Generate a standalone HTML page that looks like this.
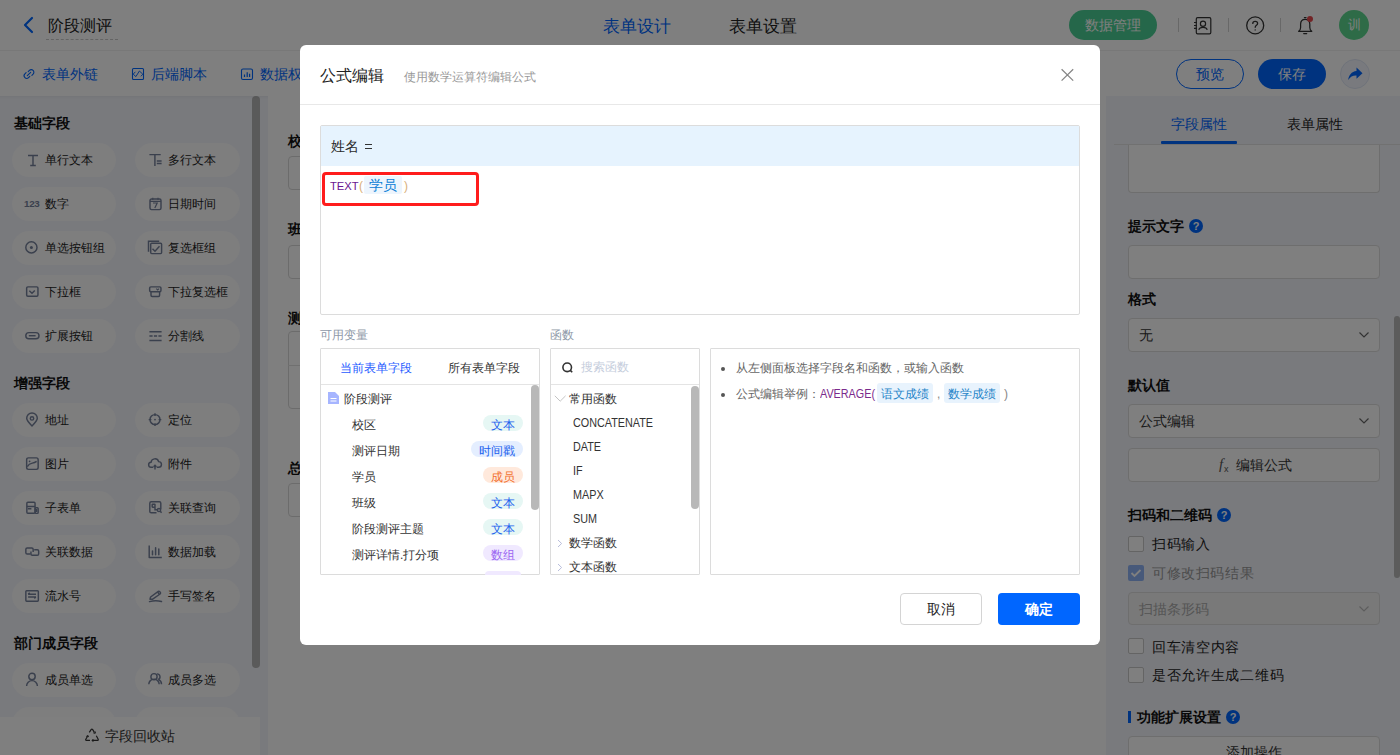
<!DOCTYPE html>
<html><head><meta charset="utf-8">
<style>
*{box-sizing:border-box;margin:0;padding:0}
html,body{width:1400px;height:755px;overflow:hidden;background:#fff;font-family:"Liberation Sans",sans-serif;color:#222}
.abs{position:absolute}
.t{position:absolute;white-space:nowrap;line-height:1}
.pill{position:absolute;height:34px;border-radius:17px;background:#fcfcfd}
</style></head><body>
<div class="abs" style="left:0;top:0;width:1400px;height:50px;background:#fff"></div>
<div class="abs" style="left:0;top:50px;width:1400px;height:1px;background:#f0f0f0"></div>
<svg class="abs" style="left:20px;top:15px" width="16" height="20" viewBox="0 0 16 20"><path d="M12 3 L5 10 L12 17" fill="none" stroke="#0066ff" stroke-width="2.2" stroke-linecap="round" stroke-linejoin="round"/></svg>
<div class="t" style="left:48px;top:18px;font-size:16px;color:#222;font-weight:normal;">阶段测评</div>
<div class="abs" style="left:46px;top:39px;width:72px;height:0;border-top:1px dashed #c8c8c8"></div>
<div class="t" style="left:603px;top:18px;font-size:17px;color:#0066ff;font-weight:normal;">表单设计</div>
<div class="t" style="left:729px;top:18px;font-size:17px;color:#222;font-weight:normal;">表单设置</div>
<div class="abs" style="left:1069px;top:10px;width:88px;height:30px;border-radius:15px;background:#4bcf94"></div>
<div class="t" style="left:1085px;top:18px;font-size:14px;color:#fff;font-weight:normal;">数据管理</div>
<div class="abs" style="left:1178px;top:18px;width:1px;height:14px;background:#d0d0d0"></div>
<div class="abs" style="left:1228px;top:18px;width:1px;height:14px;background:#d0d0d0"></div>
<div class="abs" style="left:1280px;top:18px;width:1px;height:14px;background:#d0d0d0"></div>
<svg class="abs" style="left:1192px;top:15px" width="21" height="21" viewBox="0 0 21 21" fill="none" stroke="#333" stroke-width="1.2"><rect x="4.3" y="2.7" width="14.5" height="16.2" rx="1.3"/><circle cx="11" cy="8.7" r="2.6"/><path d="M6.8 14.8 C7.5 11.5 14.5 11.5 15.2 14.8"/><path d="M2 7.5h3M2 10.5h3M2 13.3h3"/></svg>
<svg class="abs" style="left:1245px;top:15px" width="21" height="21" viewBox="0 0 21 21" fill="none" stroke="#333" stroke-width="1.3"><circle cx="10.2" cy="10.4" r="8.5"/><path d="M7.8 8.4 C7.8 5.6 12.6 5.6 12.6 8.4 C12.6 10.2 10.2 10.4 10.2 12.3" stroke-linecap="round"/><circle cx="10.2" cy="14.9" r=".7" fill="#333" stroke="none"/></svg>
<svg class="abs" style="left:1295px;top:15px" width="21" height="21" viewBox="0 0 21 21" fill="none" stroke="#333" stroke-width="1.25" stroke-linecap="round"><path d="M3.6 16.3 C5 15.6 5.6 14.6 5.6 12.6 V9.2 C5.6 6.1 7.5 4.3 10.2 4.3 C12.9 4.3 14.8 6.1 14.8 9.2 V12.6 C14.8 14.6 15.4 15.6 16.8 16.3 Z" stroke-linejoin="round"/><path d="M9.4 2.5 H11 M8.7 18.6 H11.7"/></svg>
<div class="abs" style="left:1307px;top:16px;width:6px;height:6px;border-radius:3px;background:#e5484d"></div>
<div class="abs" style="left:1339px;top:10px;width:30px;height:30px;border-radius:15px;background:#5cd78f"></div>
<div class="t" style="left:1348px;top:19px;font-size:12.5px;color:#fff;font-weight:normal;">训</div>
<div class="abs" style="left:0;top:51px;width:1400px;height:45px;background:#fff"></div>
<svg class="abs" style="left:22px;top:67px" width="14" height="14" viewBox="0 0 14 14" fill="none" stroke="#0066ff" stroke-width="1.1" stroke-linecap="round"><path d="M5.3 8.7 L8.7 5.3"/><path d="M6.2 4.6 L7.4 3.4 A2.6 2.6 0 0 1 11.1 7.1 L9.9 8.3"/><path d="M7.8 9.4 L6.6 10.6 A2.6 2.6 0 0 1 2.9 6.9 L4.1 5.7"/></svg>
<div class="t" style="left:42px;top:67px;font-size:14px;color:#0066ff;font-weight:normal;">表单外链</div>
<svg class="abs" style="left:131px;top:67px" width="14" height="14" viewBox="0 0 14 14" fill="none" stroke="#0066ff" stroke-width="1.1"><rect x="1.5" y="1.5" width="11" height="11" rx="1"/><path d="M4.4 4.8 L2.2 7.2 L4.9 9.6 L8.4 4 L11.8 7.2 L9.9 9.3" stroke-width="0.95" stroke-linejoin="round"/></svg>
<div class="t" style="left:151px;top:67px;font-size:14px;color:#0066ff;font-weight:normal;">后端脚本</div>
<svg class="abs" style="left:240px;top:67px" width="14" height="14" viewBox="0 0 14 14" fill="none" stroke="#0066ff" stroke-width="1.1"><rect x="1.5" y="2" width="11" height="10.5" rx="1.5"/><path d="M4.5 7.5 V10 M7.2 5.2 V10 M9.6 6.7 V10" stroke-width="1.2"/></svg>
<div class="t" style="left:260px;top:67px;font-size:14px;color:#0066ff;font-weight:normal;">数据权限</div>
<div class="abs" style="left:1176px;top:59px;width:68px;height:30px;border-radius:15px;border:1px solid #0066ff;background:#fff"></div>
<div class="t" style="left:1196px;top:67px;font-size:14px;color:#0066ff;font-weight:normal;">预览</div>
<div class="abs" style="left:1258px;top:59px;width:68px;height:30px;border-radius:15px;background:#0066ff"></div>
<div class="t" style="left:1278px;top:67px;font-size:14px;color:#fff;font-weight:normal;">保存</div>
<div class="abs" style="left:1340px;top:59px;width:30px;height:30px;border-radius:15px;background:#f2f5fc;border:1px solid #dfe6f5"></div>
<svg class="abs" style="left:1347px;top:66px" width="16" height="16" viewBox="0 0 16 16"><path d="M9.5 1.5 L15.5 7.2 L9.5 12.8 V9.6 C6 9.4 3.4 10.6 1.2 14 C1.7 9.2 4.5 5.6 9.5 5 Z" fill="#0066ff"/></svg>
<div class="abs" style="left:0;top:96px;width:268px;height:659px;background:#f2f4fa"></div>
<div class="abs" style="left:252px;top:96px;width:8px;height:572px;border-radius:4px;background:#b4b4b4"></div>
<div class="abs" style="left:0;top:96px;width:1400px;height:3px;background:linear-gradient(rgba(0,0,0,0.035),rgba(0,0,0,0))"></div>
<div class="t" style="left:14px;top:116px;font-size:14px;color:#111;font-weight:bold;">基础字段</div>
<div class="pill" style="left:12px;top:143px;width:104px"></div><svg class="abs" style="left:27px;top:153px;overflow:visible" width="14" height="14" viewBox="0 0 14 14" fill="none" stroke="#75809a" stroke-width="1.45"><path d="M1 2.5 H11 M6 2.5 V12.5 M3.2 12.5 H8.8"/></svg><div class="t" style="left:45px;top:154px;font-size:12px;color:#222;font-weight:normal;">单行文本</div>
<div class="pill" style="left:135px;top:143px;width:105px"></div><svg class="abs" style="left:150px;top:153px;overflow:visible" width="14" height="14" viewBox="0 0 14 14" fill="none" stroke="#75809a" stroke-width="1.45"><path d="M-0.6 1.6 H10.7 M4.9 1.6 V12.9 M6.8 7.9 H11.6 M6.8 10.5 H11.6"/></svg><div class="t" style="left:168px;top:154px;font-size:12px;color:#222;font-weight:normal;">多行文本</div>
<div class="pill" style="left:12px;top:187px;width:104px"></div><svg class="abs" style="left:27px;top:197px;overflow:visible" width="14" height="14" viewBox="0 0 14 14" fill="none" stroke="#75809a" stroke-width="1.45"></svg><div class="t" style="left:45px;top:198px;font-size:12px;color:#222;font-weight:normal;">数字</div>
<div class="pill" style="left:135px;top:187px;width:105px"></div><svg class="abs" style="left:150px;top:197px;overflow:visible" width="14" height="14" viewBox="0 0 14 14" fill="none" stroke="#75809a" stroke-width="1.45"><rect x="0" y="2" width="11" height="10.6" rx="1.5"/><path d="M0 4.3 H11 M2.8 0.8 V3 M8 0.8 V3 M3 6 H7.2 L4.8 11" stroke-width="1.2"/></svg><div class="t" style="left:168px;top:198px;font-size:12px;color:#222;font-weight:normal;">日期时间</div>
<div class="pill" style="left:12px;top:231px;width:104px"></div><svg class="abs" style="left:27px;top:241px;overflow:visible" width="14" height="14" viewBox="0 0 14 14" fill="none" stroke="#75809a" stroke-width="1.45"><circle cx="4.4" cy="6.4" r="5.6"/><circle cx="4.4" cy="6.4" r="1.5" fill="#75809a" stroke="none"/></svg><div class="t" style="left:45px;top:242px;font-size:12px;color:#222;font-weight:normal;">单选按钮组</div>
<div class="pill" style="left:135px;top:231px;width:105px"></div><svg class="abs" style="left:150px;top:241px;overflow:visible" width="14" height="14" viewBox="0 0 14 14" fill="none" stroke="#75809a" stroke-width="1.45"><path d="M-1.5 10.7 V0.2 H9.2"/><rect x="0.7" y="2.2" width="10.9" height="10.4" rx="1"/><path d="M2.5 7.7 L5 10.2 L9.5 5.3"/></svg><div class="t" style="left:168px;top:242px;font-size:12px;color:#222;font-weight:normal;">复选框组</div>
<div class="pill" style="left:12px;top:275px;width:104px"></div><svg class="abs" style="left:27px;top:285px;overflow:visible" width="14" height="14" viewBox="0 0 14 14" fill="none" stroke="#75809a" stroke-width="1.45"><rect x="-0.35" y="1.85" width="11.3" height="9.4" rx="1.2"/><path d="M2.3 5.7 L5 8.3 L7.8 5.5"/></svg><div class="t" style="left:45px;top:286px;font-size:12px;color:#222;font-weight:normal;">下拉框</div>
<div class="pill" style="left:135px;top:275px;width:105px"></div><svg class="abs" style="left:150px;top:285px;overflow:visible" width="14" height="14" viewBox="0 0 14 14" fill="none" stroke="#75809a" stroke-width="1.45"><rect x="-0.35" y="1.85" width="11.3" height="4.9" rx="1.2"/><path d="M1 6.8 V10.3 Q1 11.5 2.2 11.5 H8.4 Q9.6 11.5 9.6 10.3 V6.8"/><path d="M6.3 3.6 L7.7 5 L9 3.6" stroke-width="1.1"/></svg><div class="t" style="left:168px;top:286px;font-size:12px;color:#222;font-weight:normal;">下拉复选框</div>
<div class="pill" style="left:12px;top:319px;width:104px"></div><svg class="abs" style="left:27px;top:329px;overflow:visible" width="14" height="14" viewBox="0 0 14 14" fill="none" stroke="#75809a" stroke-width="1.45"><rect x="-1.2" y="3.6" width="13.2" height="6.2" rx="3.1"/><path d="M1.8 6.7 H8.6"/></svg><div class="t" style="left:45px;top:330px;font-size:12px;color:#222;font-weight:normal;">扩展按钮</div>
<div class="pill" style="left:135px;top:319px;width:105px"></div><svg class="abs" style="left:150px;top:329px;overflow:visible" width="14" height="14" viewBox="0 0 14 14" fill="none" stroke="#75809a" stroke-width="1.45"><path d="M-0.6 2.7 H11.6 M-0.6 7 H2.6 M3.9 7 H7.1 M8.4 7 H11.6 M-0.6 11.5 H11.6"/></svg><div class="t" style="left:168px;top:330px;font-size:12px;color:#222;font-weight:normal;">分割线</div>
<div class="t" style="left:24px;top:199px;font-size:9.8px;color:#75809a;font-weight:bold;letter-spacing:-0.3px">123</div>
<div class="t" style="left:14px;top:376px;font-size:14px;color:#111;font-weight:bold;">增强字段</div>
<div class="pill" style="left:12px;top:403px;width:104px"></div><svg class="abs" style="left:27px;top:413px;overflow:visible" width="14" height="14" viewBox="0 0 14 14" fill="none" stroke="#75809a" stroke-width="1.45"><path d="M5 12.9 C1.6 9.6 -0.3 7.5 -0.3 5.3 A5.3 5.3 0 0 1 10.3 5.3 C10.3 7.5 8.4 9.6 5 12.9 Z" stroke-linejoin="round"/><circle cx="5" cy="5.4" r="1.7"/></svg><div class="t" style="left:45px;top:414px;font-size:12px;color:#222;font-weight:normal;">地址</div>
<div class="pill" style="left:135px;top:403px;width:105px"></div><svg class="abs" style="left:150px;top:413px;overflow:visible" width="14" height="14" viewBox="0 0 14 14" fill="none" stroke="#75809a" stroke-width="1.45"><circle cx="5" cy="6.6" r="5"/><circle cx="5" cy="6.6" r="0.9" fill="#75809a" stroke="none"/><path d="M5 0.3 V3 M5 10.2 V12.9 M-1.3 6.6 H1.4 M8.6 6.6 H11.3"/></svg><div class="t" style="left:168px;top:414px;font-size:12px;color:#222;font-weight:normal;">定位</div>
<div class="pill" style="left:12px;top:447px;width:104px"></div><svg class="abs" style="left:27px;top:457px;overflow:visible" width="14" height="14" viewBox="0 0 14 14" fill="none" stroke="#75809a" stroke-width="1.45"><rect x="-0.35" y="0.85" width="11.5" height="11.5" rx="1.8"/><circle cx="2.6" cy="4.3" r="0.9" fill="#75809a" stroke="none"/><path d="M0.3 9.6 C1.8 6.8 3.3 6.4 5.3 6.1 C7.3 5.8 8.4 5.2 9.6 4.3"/></svg><div class="t" style="left:45px;top:458px;font-size:12px;color:#222;font-weight:normal;">图片</div>
<div class="pill" style="left:135px;top:447px;width:105px"></div><svg class="abs" style="left:150px;top:457px;overflow:visible" width="14" height="14" viewBox="0 0 14 14" fill="none" stroke="#75809a" stroke-width="1.45"><path d="M3.3 10.3 H1.3 A2.5 2.5 0 0 1 1.0 5.3 A3.9 3.9 0 0 1 8.6 4.6 A2.85 2.85 0 0 1 8.6 10.3 H6.7"/><path d="M5 12.6 V8.3 M3.6 9.7 L5 8.2 L6.4 9.7"/></svg><div class="t" style="left:168px;top:458px;font-size:12px;color:#222;font-weight:normal;">附件</div>
<div class="pill" style="left:12px;top:491px;width:104px"></div><svg class="abs" style="left:27px;top:501px;overflow:visible" width="14" height="14" viewBox="0 0 14 14" fill="none" stroke="#75809a" stroke-width="1.45"><rect x="-0.15" y="1.15" width="8.2" height="11.2" rx="1"/><path d="M-0.15 5.4 H8.05 M0.8 7.8 H4.4"/><rect x="8.15" y="6.65" width="3" height="5.7" rx="0.8"/><path d="M9.6 8 V11"/></svg><div class="t" style="left:45px;top:502px;font-size:12px;color:#222;font-weight:normal;">子表单</div>
<div class="pill" style="left:135px;top:491px;width:105px"></div><svg class="abs" style="left:150px;top:501px;overflow:visible" width="14" height="14" viewBox="0 0 14 14" fill="none" stroke="#75809a" stroke-width="1.45"><path d="M10.8 8.2 V2.2 Q10.8 0.8 9.4 0.8 H1.2 Q-0.2 0.8 -0.2 2.2 V10.4 Q-0.2 11.8 1.2 11.8 H6.5"/><rect x="2.2" y="3.2" width="2.8" height="3" rx="0.4"/><path d="M5 6.2 V8.7 H7.3"/><circle cx="9" cy="9" r="1.6"/><path d="M10.2 10.2 L11.6 11.8"/></svg><div class="t" style="left:168px;top:502px;font-size:12px;color:#222;font-weight:normal;">关联查询</div>
<div class="pill" style="left:12px;top:535px;width:104px"></div><svg class="abs" style="left:27px;top:545px;overflow:visible" width="14" height="14" viewBox="0 0 14 14" fill="none" stroke="#75809a" stroke-width="1.45"><path d="M3.5 9.05 H0.2 Q-1.15 9.05 -1.15 7.7 V4.3 Q-1.15 2.95 0.2 2.95 H4.8 Q6.15 2.95 6.15 4.3 V7"/><path d="M7.2 4.65 H10.3 Q11.65 4.65 11.65 6 V8.9 Q11.65 10.25 10.3 10.25 H5.3 Q3.95 10.25 3.95 8.9 V6.5"/></svg><div class="t" style="left:45px;top:546px;font-size:12px;color:#222;font-weight:normal;">关联数据</div>
<div class="pill" style="left:135px;top:535px;width:105px"></div><svg class="abs" style="left:150px;top:545px;overflow:visible" width="14" height="14" viewBox="0 0 14 14" fill="none" stroke="#75809a" stroke-width="1.45"><path d="M-0.8 0.4 V12.4 H11.8" stroke-linejoin="round"/><path d="M2.5 6 V9.8 M5.6 2.8 V9.8 M8.8 4 V9.8" stroke-width="1.5" stroke-linecap="round"/></svg><div class="t" style="left:168px;top:546px;font-size:12px;color:#222;font-weight:normal;">数据加载</div>
<div class="pill" style="left:12px;top:579px;width:104px"></div><svg class="abs" style="left:27px;top:589px;overflow:visible" width="14" height="14" viewBox="0 0 14 14" fill="none" stroke="#75809a" stroke-width="1.45"><rect x="-1.15" y="1.65" width="12.5" height="10.5" rx="0.8"/><path d="M1.1 5.2 H9 M1.1 8 H9 M2.8 3.9 L1.1 5.2 M7.3 9.3 L9 8"/></svg><div class="t" style="left:45px;top:590px;font-size:12px;color:#222;font-weight:normal;">流水号</div>
<div class="pill" style="left:135px;top:579px;width:105px"></div><svg class="abs" style="left:150px;top:589px;overflow:visible" width="14" height="14" viewBox="0 0 14 14" fill="none" stroke="#75809a" stroke-width="1.45"><path d="M0 10.3 L0.6 8 L8.3 2.4 Q9.1 1.9 9.7 2.6 L10.4 3.5 Q10.9 4.3 10.1 5 L2.3 10.3 Z" stroke-linejoin="round"/><path d="M7.6 3 L9.4 5.4"/><path d="M-0.5 12.6 C3 11.7 7 11.4 11.5 12.5" stroke-linecap="round"/></svg><div class="t" style="left:168px;top:590px;font-size:12px;color:#222;font-weight:normal;">手写签名</div>
<div class="t" style="left:14px;top:636px;font-size:14px;color:#111;font-weight:bold;">部门成员字段</div>
<div class="pill" style="left:12px;top:663px;width:104px"></div><svg class="abs" style="left:27px;top:673px;overflow:visible" width="14" height="14" viewBox="0 0 14 14" fill="none" stroke="#75809a" stroke-width="1.45"><circle cx="5" cy="3.5" r="3.2"/><path d="M-0.4 13 A5.4 5.4 0 0 1 10.4 13"/></svg><div class="t" style="left:45px;top:674px;font-size:12px;color:#222;font-weight:normal;">成员单选</div>
<div class="pill" style="left:135px;top:663px;width:105px"></div><svg class="abs" style="left:150px;top:673px;overflow:visible" width="14" height="14" viewBox="0 0 14 14" fill="none" stroke="#75809a" stroke-width="1.45"><circle cx="4" cy="3.7" r="3.1"/><path d="M-1.2 11.3 A5.2 5.2 0 0 1 9.2 11.3"/><path d="M6.9 0.9 A3 3 0 0 1 8.3 6.6"/><path d="M8.4 6.4 A5.2 5.2 0 0 1 11.5 11.3"/></svg><div class="t" style="left:168px;top:674px;font-size:12px;color:#222;font-weight:normal;">成员多选</div>
<div class="pill" style="left:12px;top:707px;width:104px"></div>
<div class="pill" style="left:135px;top:707px;width:105px"></div>
<div class="abs" style="left:0;top:717px;width:260px;height:38px;background:#fff"></div>
<svg class="abs" style="left:84px;top:727px;overflow:visible" width="16" height="16" viewBox="0 0 16 16" fill="none" stroke="#333" stroke-width="1.2" stroke-linejoin="round"><path d="M5.3 5.4 L7.1 2.6 Q7.9 1.6 8.7 2.6 L10.4 5.4"/><path d="M12.3 8.8 L14.2 12.2 Q14.5 13.4 13.4 13.4 L8.4 13.4"/><path d="M6 13.4 L2.4 13.4 Q1.3 13.3 1.8 12.2 L3.6 9.2"/><path d="M9.5 5.9 L11.1 6.2 L11.5 4.7 M9.4 12.3 L8.1 13.4 L9.4 14.5 M2.4 9.7 L3.7 8.6 L4.6 9.9" stroke-width="1.1"/></svg>
<div class="t" style="left:105px;top:729px;font-size:14px;color:#333;font-weight:normal;">字段回收站</div>
<div class="abs" style="left:268px;top:96px;width:838px;height:659px;background:#fff"></div>
<div class="t" style="left:288px;top:134px;font-size:14px;color:#111;font-weight:bold;">校区</div>
<div class="abs" style="left:288px;top:156px;width:200px;height:34px;border:1px solid #d9d9d9;border-radius:4px"></div>
<div class="t" style="left:288px;top:222px;font-size:14px;color:#111;font-weight:bold;">班级</div>
<div class="abs" style="left:288px;top:245px;width:200px;height:34px;border:1px solid #d9d9d9;border-radius:4px"></div>
<div class="t" style="left:288px;top:311px;font-size:14px;color:#111;font-weight:bold;">测评</div>
<div class="abs" style="left:288px;top:331px;width:200px;height:78px;border:1px solid #d9d9d9;border-radius:4px"></div>
<div class="abs" style="left:288px;top:365px;width:200px;height:1px;background:#e0e0e0"></div>
<div class="t" style="left:288px;top:461px;font-size:14px;color:#111;font-weight:bold;">总分</div>
<div class="abs" style="left:288px;top:483px;width:200px;height:34px;border:1px solid #d9d9d9;border-radius:4px"></div>
<div class="abs" style="left:1106px;top:96px;width:294px;height:659px;background:#f2f4fa"></div>
<div class="t" style="left:1171px;top:117px;font-size:14px;color:#0066ff;font-weight:normal;">字段属性</div>
<div class="t" style="left:1287px;top:117px;font-size:14px;color:#222;font-weight:normal;">表单属性</div>
<div class="abs" style="left:1128px;top:145px;width:252px;height:48px;border:1px solid #dcdcdc;border-top:none;border-radius:0 0 4px 4px;background:#fff"></div>
<div class="abs" style="left:1114px;top:144px;width:286px;height:1px;background:#e2e2e2"></div>
<div class="abs" style="left:1161px;top:141px;width:76px;height:3px;background:#0066ff;border-radius:1px"></div>
<div class="t" style="left:1128px;top:219px;font-size:14px;color:#111;font-weight:bold;">提示文字</div>
<div class="abs" style="left:1189px;top:219px;width:14px;height:14px;border-radius:7px;background:#0066ff;color:#fff;font-size:11px;line-height:14px;text-align:center;font-weight:bold">?</div>
<div class="abs" style="left:1128px;top:245px;width:252px;height:34px;border:1px solid #dcdcdc;border-radius:4px;background:#fff"></div>
<div class="t" style="left:1128px;top:292px;font-size:14px;color:#111;font-weight:bold;">格式</div>
<div class="abs" style="left:1128px;top:318px;width:252px;height:34px;border:1px solid #dcdcdc;border-radius:4px;background:#fff"></div>
<div class="t" style="left:1139px;top:328px;font-size:14px;color:#333;font-weight:normal;">无</div>
<svg class="abs" style="left:1358px;top:331px" width="12" height="8" viewBox="0 0 12 8"><path d="M1.5 1.5 L6 6 L10.5 1.5" fill="none" stroke="#666" stroke-width="1.2"/></svg>
<div class="t" style="left:1128px;top:378px;font-size:14px;color:#111;font-weight:bold;">默认值</div>
<div class="abs" style="left:1128px;top:404px;width:252px;height:34px;border:1px solid #dcdcdc;border-radius:4px;background:#fff"></div>
<div class="t" style="left:1139px;top:414px;font-size:14px;color:#333;font-weight:normal;">公式编辑</div>
<svg class="abs" style="left:1358px;top:417px" width="12" height="8" viewBox="0 0 12 8"><path d="M1.5 1.5 L6 6 L10.5 1.5" fill="none" stroke="#666" stroke-width="1.2"/></svg>
<div class="abs" style="left:1128px;top:448px;width:252px;height:34px;border:1px solid #dcdcdc;border-radius:4px;background:#fff"></div>
<div class="t" style="left:1219px;top:457px;font-size:15px;color:#555;font-family:'Liberation Serif',serif;font-style:italic">f</div>
<div class="t" style="left:1224px;top:465px;font-size:9px;color:#555;font-family:'Liberation Sans',sans-serif">x</div>
<div class="t" style="left:1236px;top:458px;font-size:14px;color:#333;font-weight:normal;">编辑公式</div>
<div class="t" style="left:1128px;top:508px;font-size:14px;color:#111;font-weight:bold;">扫码和二维码</div>
<div class="abs" style="left:1217px;top:508px;width:14px;height:14px;border-radius:7px;background:#0066ff;color:#fff;font-size:11px;line-height:14px;text-align:center;font-weight:bold">?</div>
<div class="abs" style="left:1128px;top:536px;width:16px;height:16px;border-radius:2px;border:1px solid #c8c8c8;background:#fff"></div>
<div class="t" style="left:1152px;top:537px;font-size:14px;color:#222;font-weight:normal;letter-spacing:0.6px">扫码输入</div>
<div class="abs" style="left:1128px;top:565px;width:16px;height:16px;border-radius:2px;background:#8fb3f5"></div><svg class="abs" style="left:1128px;top:565px" width="16" height="16" viewBox="0 0 16 16"><path d="M3.5 8 L6.5 11 L12.5 5" fill="none" stroke="#fff" stroke-width="1.8"/></svg>
<div class="t" style="left:1152px;top:566px;font-size:14px;color:#999;font-weight:normal;letter-spacing:0.6px">可修改扫码结果</div>
<div class="abs" style="left:1128px;top:592px;width:252px;height:33px;border:1px solid #dcdcdc;border-radius:4px;background:#f3f3f3"></div>
<div class="t" style="left:1139px;top:602px;font-size:14px;color:#aaa;font-weight:normal;">扫描条形码</div>
<svg class="abs" style="left:1358px;top:605px" width="12" height="8" viewBox="0 0 12 8"><path d="M1.5 1.5 L6 6 L10.5 1.5" fill="none" stroke="#bbb" stroke-width="1.2"/></svg>
<div class="abs" style="left:1128px;top:638px;width:16px;height:16px;border-radius:2px;border:1px solid #c8c8c8;background:#fff"></div>
<div class="t" style="left:1152px;top:640px;font-size:14px;color:#222;font-weight:normal;letter-spacing:0.7px">回车清空内容</div>
<div class="abs" style="left:1128px;top:667px;width:16px;height:16px;border-radius:2px;border:1px solid #c8c8c8;background:#fff"></div>
<div class="t" style="left:1152px;top:668px;font-size:14px;color:#222;font-weight:normal;letter-spacing:0.7px">是否允许生成二维码</div>
<div class="abs" style="left:1128px;top:711px;width:3px;height:12px;background:#0066ff"></div>
<div class="t" style="left:1137px;top:710px;font-size:14px;color:#111;font-weight:bold;">功能扩展设置</div>
<div class="abs" style="left:1226px;top:710px;width:14px;height:14px;border-radius:7px;background:#0066ff;color:#fff;font-size:11px;line-height:14px;text-align:center;font-weight:bold">?</div>
<div class="abs" style="left:1128px;top:736px;width:252px;height:34px;border:1px solid #dcdcdc;border-radius:4px;background:#fff"></div>
<div class="t" style="left:1226px;top:745px;font-size:14px;color:#333;font-weight:normal;">添加操作</div>
<div class="abs" style="left:1394px;top:316px;width:6px;height:262px;border-radius:3px;background:#b8b8b8"></div>
<div class="abs" style="left:0;top:0;width:1400px;height:755px;background:rgba(0,0,0,.5)"></div>
<div class="abs" style="left:300px;top:45px;width:800px;height:600px;background:#fff;border-radius:6px"></div>
<div class="t" style="left:320px;top:68px;font-size:16px;color:#222;font-weight:normal;">公式编辑</div>
<div class="t" style="left:404px;top:71px;font-size:12px;color:#999;font-weight:normal;">使用数学运算符编辑公式</div>
<svg class="abs" style="left:1060px;top:68px" width="15" height="15" viewBox="0 0 15 15"><path d="M1.6 1.3 L13.2 12.6 M13.2 1.3 L1.6 12.6" stroke="#858585" stroke-width="1.25"/></svg>
<div class="abs" style="left:300px;top:104px;width:800px;height:1px;background:#e8e8e8"></div>
<div class="abs" style="left:320px;top:125px;width:760px;height:190px;border:1px solid #dcdcdc;border-radius:2px;background:#fff"></div>
<div class="abs" style="left:321px;top:126px;width:758px;height:40px;background:#e6f3fe"></div>
<div class="t" style="left:331px;top:139px;font-size:14px;color:#2a2a2a;font-weight:normal;">姓名</div>
<div class="abs" style="left:364.5px;top:144px;width:7px;height:1.2px;background:#333"></div><div class="abs" style="left:364.5px;top:147.5px;width:7px;height:1.2px;background:#333"></div>
<div class="abs" style="left:322px;top:172px;width:157px;height:34px;border:3px solid #ff1c1c;border-radius:4px"></div>
<div class="t" style="left:330px;top:181px;font-size:11.2px;color:#6a1590;font-weight:normal;font-family:"Liberation Mono",monospace;letter-spacing:-0.6px">TEXT</div>
<div class="t" style="left:359px;top:180px;font-size:12px;color:#d8b07a;font-weight:normal;">(</div>
<div class="abs" style="left:364px;top:176px;width:38px;height:18px;background:#edf5fd;border-radius:2px"></div>
<div class="t" style="left:369px;top:178px;font-size:14px;color:#0a80d6;font-weight:normal;">学员</div>
<div class="t" style="left:404px;top:180px;font-size:12px;color:#d8b07a;font-weight:normal;">)</div>
<div class="t" style="left:320px;top:329px;font-size:12px;color:#8e98a8;font-weight:normal;">可用变量</div>
<div class="t" style="left:550px;top:329px;font-size:12px;color:#8e98a8;font-weight:normal;">函数</div>
<div class="abs" style="left:320px;top:348px;width:220px;height:227px;border:1px solid #dcdcdc;border-radius:1px"></div>
<div class="t" style="left:340px;top:362px;font-size:12px;color:#1f5cff;font-weight:normal;">当前表单字段</div>
<div class="t" style="left:448px;top:362px;font-size:12px;color:#333;font-weight:normal;">所有表单字段</div>
<div class="abs" style="left:321px;top:384px;width:218px;height:1px;background:#e4e4e4"></div>
<div class="abs" style="left:531px;top:385px;width:8px;height:125px;border-radius:4px;background:#b8b8b8"></div>
<svg class="abs" style="left:328px;top:392px" width="11" height="12" viewBox="0 0 11 12"><path d="M0 0 H7 L11 4 V12 H0 Z" fill="#a6b5ff"/><path d="M2.5 6.5 H8.5 M2.5 9 H8.5" stroke="#fff" stroke-width="1"/></svg>
<div class="t" style="left:344px;top:393px;font-size:12px;color:#333;font-weight:normal;">阶段测评</div>
<div class="t" style="left:352px;top:419px;font-size:12px;color:#333;font-weight:normal;">校区</div>
<div class="abs" style="left:483px;top:415px;width:40px;height:16px;border-radius:8px;background:#e6f7f4"></div>
<div class="t" style="left:491px;top:419px;font-size:12px;color:#2262ee;font-weight:normal;">文本</div>
<div class="t" style="left:352px;top:445px;font-size:12px;color:#333;font-weight:normal;">测评日期</div>
<div class="abs" style="left:471px;top:441px;width:52px;height:16px;border-radius:8px;background:#e4eeff"></div>
<div class="t" style="left:479px;top:445px;font-size:12px;color:#2262ee;font-weight:normal;">时间戳</div>
<div class="t" style="left:352px;top:471px;font-size:12px;color:#333;font-weight:normal;">学员</div>
<div class="abs" style="left:483px;top:467px;width:40px;height:16px;border-radius:8px;background:#ffe9dc"></div>
<div class="t" style="left:491px;top:471px;font-size:12px;color:#f2702e;font-weight:normal;">成员</div>
<div class="t" style="left:352px;top:497px;font-size:12px;color:#333;font-weight:normal;">班级</div>
<div class="abs" style="left:483px;top:493px;width:40px;height:16px;border-radius:8px;background:#e6f7f4"></div>
<div class="t" style="left:491px;top:497px;font-size:12px;color:#2262ee;font-weight:normal;">文本</div>
<div class="t" style="left:352px;top:523px;font-size:12px;color:#333;font-weight:normal;">阶段测评主题</div>
<div class="abs" style="left:483px;top:519px;width:40px;height:16px;border-radius:8px;background:#e6f7f4"></div>
<div class="t" style="left:491px;top:523px;font-size:12px;color:#2262ee;font-weight:normal;">文本</div>
<div class="t" style="left:352px;top:549px;font-size:12px;color:#333;font-weight:normal;">测评详情.打分项</div>
<div class="abs" style="left:483px;top:545px;width:40px;height:16px;border-radius:8px;background:#f0e9ff"></div>
<div class="t" style="left:491px;top:549px;font-size:12px;color:#9b66f2;font-weight:normal;">数组</div>
<div class="abs" style="left:485px;top:571px;width:36px;height:4px;border-radius:4px 4px 0 0;background:#f0e9ff"></div>
<div class="abs" style="left:550px;top:348px;width:150px;height:227px;border:1px solid #dcdcdc;border-radius:1px"></div>
<svg class="abs" style="left:561px;top:361px" width="13" height="13" viewBox="0 0 13 13" fill="none" stroke="#333" stroke-width="1.6"><circle cx="6.2" cy="6.3" r="4.3"/><path d="M9.3 9.4 L11.2 11.3"/></svg>
<div class="t" style="left:581px;top:361px;font-size:12px;color:#c5cddc;font-weight:normal;">搜索函数</div>
<div class="abs" style="left:551px;top:384px;width:148px;height:1px;background:#e4e4e4"></div>
<div class="abs" style="left:691px;top:386px;width:8px;height:123px;border-radius:4px;background:#b8b8b8"></div>
<svg class="abs" style="left:554px;top:395px" width="13" height="8" viewBox="0 0 13 8"><path d="M0.8 0.8 L6.2 6.2 L11.6 0.8" fill="none" stroke="#c4c4c4" stroke-width="1"/></svg>
<div class="t" style="left:569px;top:393px;font-size:12px;color:#333;font-weight:normal;">常用函数</div>
<div class="t" style="left:573px;top:417px;font-size:12px;color:#333;font-weight:normal;transform:scaleX(0.9);transform-origin:0 0">CONCATENATE</div>
<div class="t" style="left:573px;top:441px;font-size:12px;color:#333;font-weight:normal;transform:scaleX(0.9);transform-origin:0 0">DATE</div>
<div class="t" style="left:573px;top:465px;font-size:12px;color:#333;font-weight:normal;transform:scaleX(0.9);transform-origin:0 0">IF</div>
<div class="t" style="left:573px;top:489px;font-size:12px;color:#333;font-weight:normal;transform:scaleX(0.9);transform-origin:0 0">MAPX</div>
<div class="t" style="left:573px;top:513px;font-size:12px;color:#333;font-weight:normal;transform:scaleX(0.9);transform-origin:0 0">SUM</div>
<svg class="abs" style="left:557px;top:539px" width="6" height="9" viewBox="0 0 6 9"><path d="M1 1 L4.6 4.5 L1 8" fill="none" stroke="#b9bedc" stroke-width="1"/></svg>
<div class="t" style="left:569px;top:537px;font-size:12px;color:#333;font-weight:normal;">数学函数</div>
<svg class="abs" style="left:557px;top:563px" width="6" height="9" viewBox="0 0 6 9"><path d="M1 1 L4.6 4.5 L1 8" fill="none" stroke="#b9bedc" stroke-width="1"/></svg>
<div class="t" style="left:569px;top:561px;font-size:12px;color:#333;font-weight:normal;">文本函数</div>
<div class="abs" style="left:710px;top:348px;width:370px;height:227px;border:1px solid #dcdcdc;border-radius:1px"></div>
<div class="abs" style="left:721px;top:367px;width:4px;height:4px;border-radius:2px;background:#555"></div>
<div class="t" style="left:736px;top:362px;font-size:12px;color:#666;font-weight:normal;">从左侧面板选择字段名和函数，或输入函数</div>
<div class="abs" style="left:721px;top:393px;width:4px;height:4px;border-radius:2px;background:#555"></div>
<div class="t" style="left:736px;top:388px;font-size:12px;color:#666;font-weight:normal;">公式编辑举例：</div>
<div class="t" style="left:820px;top:388px;font-size:12px;color:#7b2a8c;font-weight:normal;transform:scaleX(0.9);transform-origin:0 0">AVERAGE(</div>
<div class="abs" style="left:877px;top:383px;width:56px;height:20px;background:#e8f3fd;border-radius:3px"></div>
<div class="t" style="left:881px;top:388px;font-size:12px;color:#2584c8;font-weight:normal;">语文成绩</div>
<div class="t" style="left:937px;top:388px;font-size:12px;color:#888;font-weight:normal;">,</div>
<div class="abs" style="left:944px;top:383px;width:56px;height:20px;background:#e8f3fd;border-radius:3px"></div>
<div class="t" style="left:948px;top:388px;font-size:12px;color:#2584c8;font-weight:normal;">数学成绩</div>
<div class="t" style="left:1004px;top:388px;font-size:12px;color:#888;font-weight:normal;">)</div>
<div class="abs" style="left:900px;top:593px;width:82px;height:32px;border:1px solid #d4d4d4;border-radius:4px;background:#fff"></div>
<div class="t" style="left:927px;top:602px;font-size:14px;color:#222;font-weight:normal;">取消</div>
<div class="abs" style="left:998px;top:593px;width:82px;height:32px;border-radius:4px;background:#0066ff"></div>
<div class="t" style="left:1025px;top:602px;font-size:14px;color:#fff;font-weight:bold;">确定</div>
</body></html>
